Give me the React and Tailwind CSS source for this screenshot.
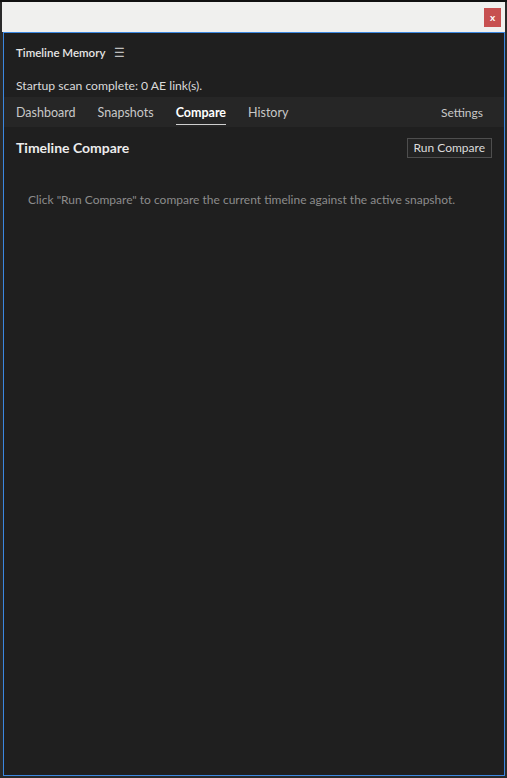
import React from 'react'

const tabs = ['Dashboard', 'Snapshots', 'Compare', 'History']

export default function App() {
    const active = 'Compare'

    return (
        <div className="w-[507px] h-[778px] bg-[#2a2a2a] flex flex-col overflow-hidden" style={{ fontFamily: 'Lato, "Noto Sans", sans-serif' }}>
            <div className="h-[2px] bg-[#111]" />
            <div className="flex-1 flex flex-col pl-[2px] pr-[2px]">
                {/* window title bar */}
                <div className="h-[30px] bg-[#f0f0ee] flex items-center justify-end pr-[4px]">
                    <button className="w-[17px] h-[19px] bg-[#c75050] text-white text-[10px] font-bold leading-none flex items-center justify-center">x</button>
                </div>

                {/* panel */}
                <div className="flex-1 border border-[#3b87e0] bg-[#1f1f1f] ml-[1px] mb-[2px] flex flex-col">
                    <div className="h-[37px] flex items-center px-[12px] pt-[3px] gap-[9px]">
                        <span className="text-[11.5px] font-semibold text-[#e6e6e6]">Timeline Memory</span>
                        <span className="text-[12px] text-[#bdbdbd]">☰</span>
                    </div>

                    <div className="px-[12px] pt-[7px] pb-[2px] text-[12.2px] text-[#dadada]">
                        Startup scan complete: 0 AE link(s).
                    </div>

                    <div className="h-[30px] bg-[#262626] flex items-stretch px-[12px] text-[12.5px]">
                        <div className="flex gap-[22px] pt-[5px] pb-[2px]">
                            {tabs.map(t => (
                                <div key={t} className={t === active
                                    ? 'flex items-center border-b border-[#cfcfcf] font-bold text-white'
                                    : 'flex items-center border-b border-transparent text-[#c8c8c8]'}>
                                    {t}
                                </div>
                            ))}
                        </div>
                        <div className="ml-auto flex items-center pr-[9px] pt-[2px] text-[#c8c8c8] text-[12px]">Settings</div>
                    </div>

                    <div className="flex items-center justify-between px-[12px] pt-[10px]">
                        <h2 className="text-[14px] font-bold text-[#ececec]">Timeline Compare</h2>
                        <button className="h-[20px] px-[6px] border border-[#4e4e4e] bg-[#232323] text-[12px] text-[#dcdcdc]">Run Compare</button>
                    </div>

                    <p className="px-[24px] pt-[33px] text-[12px] text-[#8c8c8c]">
                        Click "Run Compare" to compare the current timeline against the active snapshot.
                    </p>
                </div>
            </div>
        </div>
    )
}
